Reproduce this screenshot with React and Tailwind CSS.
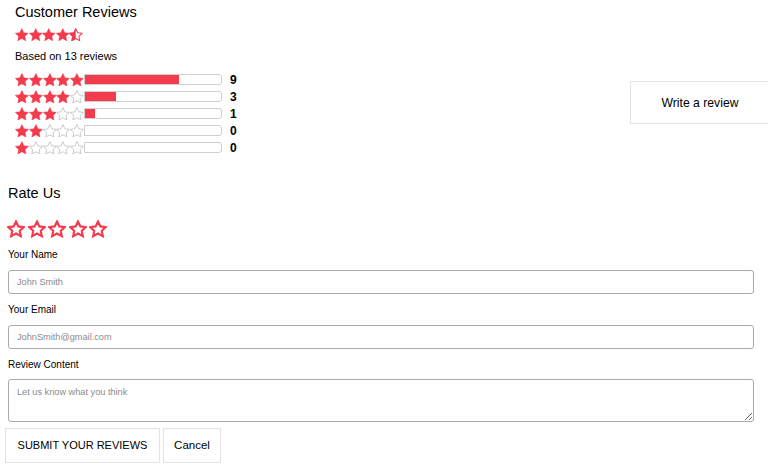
import React from 'react';

const STAR = '12,2.5 14.9,8.6 21.5,9.4 16.6,13.9 17.9,20.5 12,17.2 6.1,20.5 7.4,13.9 2.5,9.4 9.1,8.6';
const VB = '2 2 20 19.2';

function Star({ kind = 'full', size = 14 }) {
  if (kind === 'full') {
    return (
      <svg width={size} height={size} viewBox={VB}>
        <polygon points={STAR} fill="#f43a4d" stroke="#f43a4d" strokeWidth="0.8" strokeLinejoin="round" />
      </svg>
    );
  }
  if (kind === 'half') {
    return (
      <svg width={size} height={size} viewBox={VB}>
        <defs>
          <clipPath id="lefthalf">
            <rect x="0" y="0" width="12" height="24" />
          </clipPath>
        </defs>
        <polygon points={STAR} fill="none" stroke="#f43a4d" strokeWidth="1.5" strokeLinejoin="round" />
        <polygon points={STAR} fill="#f43a4d" stroke="#f43a4d" strokeWidth="0.8" clipPath="url(#lefthalf)" />
      </svg>
    );
  }
  if (kind === 'red') {
    return (
      <svg width={size} height={size} viewBox="1 1 22 21.5">
        <polygon points={STAR} fill="#fff" stroke="#f43a4d" strokeWidth="2.6" strokeLinejoin="miter" />
      </svg>
    );
  }
  return (
    <svg width={size} height={size} viewBox={VB}>
      <polygon points={STAR} fill="#fff" stroke="#c4c4c4" strokeWidth="1.3" strokeLinejoin="round" />
    </svg>
  );
}

const rows = [
  { stars: 5, count: 9 },
  { stars: 4, count: 3 },
  { stars: 3, count: 1 },
  { stars: 2, count: 0 },
  { stars: 1, count: 0 },
];
const total = 13;

export default function App() {
  return (
    <div className="w-[768px] h-[468px] overflow-hidden bg-white text-black" style={{ fontFamily: '"Liberation Sans", Arial, sans-serif' }}>
      <div className="flex">
        <div className="pl-[15px] pt-[3px] w-[615px] shrink-0">
          <h2 className="text-[14.5px] leading-[18px]">Customer Reviews</h2>
          <div className="flex mt-[6px] h-[15px] items-center">
            <Star size={13.5} />
            <Star size={13.5} />
            <Star size={13.5} />
            <Star size={13.5} />
            <Star kind="half" size={13.5} />
          </div>
          <p className="text-[11px] leading-[16px] mt-[6px]">Based on 13 reviews</p>
          <div className="mt-[7px] flex flex-col">
            {rows.map((r) => (
              <div key={r.stars} className="flex items-center h-[17px]">
                <div className="flex">
                  {[1, 2, 3, 4, 5].map((i) => (
                    <Star key={i} kind={i <= r.stars ? 'full' : 'empty'} size={13.8} />
                  ))}
                </div>
                <div className="w-[138px] h-[11px] border border-[#cfcfcf] rounded-r-[3px] bg-white overflow-hidden">
                  <div className="h-full bg-[#f43a4d]" style={{ width: `${(r.count / total) * 100}%` }} />
                </div>
                <span className="ml-[8px] text-[12px] font-bold">{r.count}</span>
              </div>
            ))}
          </div>
        </div>
        <div className="flex-1 pt-[81px]">
          <button className="ml-[15px] w-[140px] h-[43px] pt-[2px] border border-[#e2e2e2] bg-white text-[12.2px]">Write a review</button>
        </div>
      </div>

      <div className="px-[8px] mt-[28px]">
        <h3 className="text-[14.5px] leading-[18px]">Rate Us</h3>
        <div className="flex gap-[2.5px] mt-[18px] -ml-[1px]">
          {[1, 2, 3, 4, 5].map((i) => (
            <Star key={i} kind="red" size={18} />
          ))}
        </div>
        <label className="block text-[10px] leading-[13px] mt-[10px]">Your Name</label>
        <input
          className="block mt-[9px] w-[746px] h-[24px] border border-[#a9a9a9] rounded-[3px] px-[8px] text-[9.2px] placeholder:text-[#8a8a8a]"
          placeholder="John Smith"
        />
        <label className="block text-[10px] leading-[13px] mt-[9px]">Your Email</label>
        <input
          className="block mt-[9px] w-[746px] h-[24px] border border-[#a9a9a9] rounded-[3px] px-[8px] text-[9.2px] placeholder:text-[#8a8a8a]"
          placeholder="JohnSmith@gmail.com"
        />
        <label className="block text-[10px] leading-[13px] mt-[9px]">Review Content</label>
        <textarea
          className="block mt-[8px] w-[746px] h-[43px] border border-[#a9a9a9] rounded-[3px] px-[8px] py-[6px] text-[9.2px] placeholder:text-[#8a8a8a]"
          placeholder="Let us know what you think"
        />
        <div className="flex gap-[3px] mt-[6px] -ml-[3px]">
          <button className="h-[35px] w-[155px] border border-[#e2e2e2] bg-white text-[11px]">SUBMIT YOUR REVIEWS</button>
          <button className="h-[35px] w-[58px] border border-[#e2e2e2] bg-white text-[11.5px]">Cancel</button>
        </div>
      </div>
    </div>
  );
}
